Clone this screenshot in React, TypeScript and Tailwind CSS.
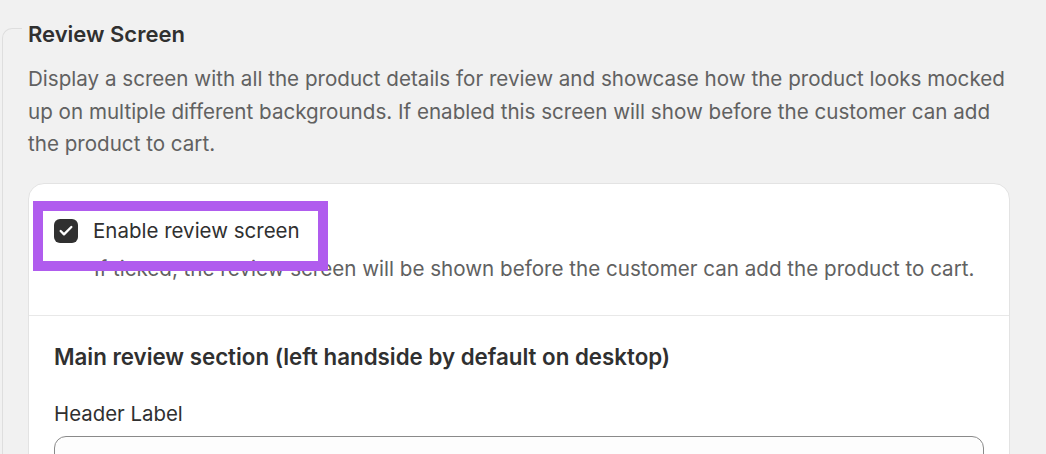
import { Check } from "lucide-react";

export default function App() {
  return (
    <div
      className="relative h-[454px] w-[1046px] overflow-hidden bg-[#f1f1f1] text-[#303030]"
      style={{ fontFamily: "Inter, 'Noto Sans', sans-serif" }}
    >
      {/* outer panel edge */}
      <div className="absolute left-[2px] top-[28px] h-[500px] w-[20px] rounded-tl-[10px] border-l border-t border-[#dedede]" />

      <div className="pl-[28px] pr-[36px] pt-[22px]">
        <h2 className="text-[22px] font-semibold leading-[24px]">Review Screen</h2>
        <p className="mt-[17px] text-[20.6px] leading-[32.5px] text-[#616161]">
          Display a screen with all the product details for review and showcase how the product looks mocked
          up on multiple different backgrounds. If enabled this screen will show before the customer can add
          the product to cart.
        </p>

        <div className="relative mt-[22px] rounded-[16px] border border-[#e3e3e3] bg-white">
          <div className="h-[132px] border-b border-[#e8e8e8] px-[25px] pt-[34px]">
            <div className="flex items-center gap-[15px]">
              <span className="flex h-[24px] w-[24px] items-center justify-center rounded-[6px] bg-[#303030]">
                <Check className="h-[16px] w-[16px] text-white" strokeWidth={3.5} />
              </span>
              <span className="text-[20.5px] leading-[26px]">Enable review screen</span>
            </div>
            <p className="mt-[12px] pl-[40px] text-[20.6px] leading-[26px] text-[#616161]">
              If ticked, the review screen will be shown before the customer can add the product to cart.
            </p>
          </div>

          <div className="px-[25px] pt-[28px]">
            <h3 className="text-[22.3px] font-semibold leading-[26px]">
              Main review section (left handside by default on desktop)
            </h3>
            <div className="mt-[31px] text-[20.4px] leading-[26px]">Header Label</div>
            <div className="mt-[9px] h-[48px] rounded-[12px] border border-[#8a8a8a] bg-[#fdfdfd]" />
          </div>

          {/* annotation highlight */}
          <div className="absolute left-[4px] top-[17px] h-[70px] w-[295px] border-[10px] border-[#b05cee]" />
        </div>
      </div>
    </div>
  );
}
